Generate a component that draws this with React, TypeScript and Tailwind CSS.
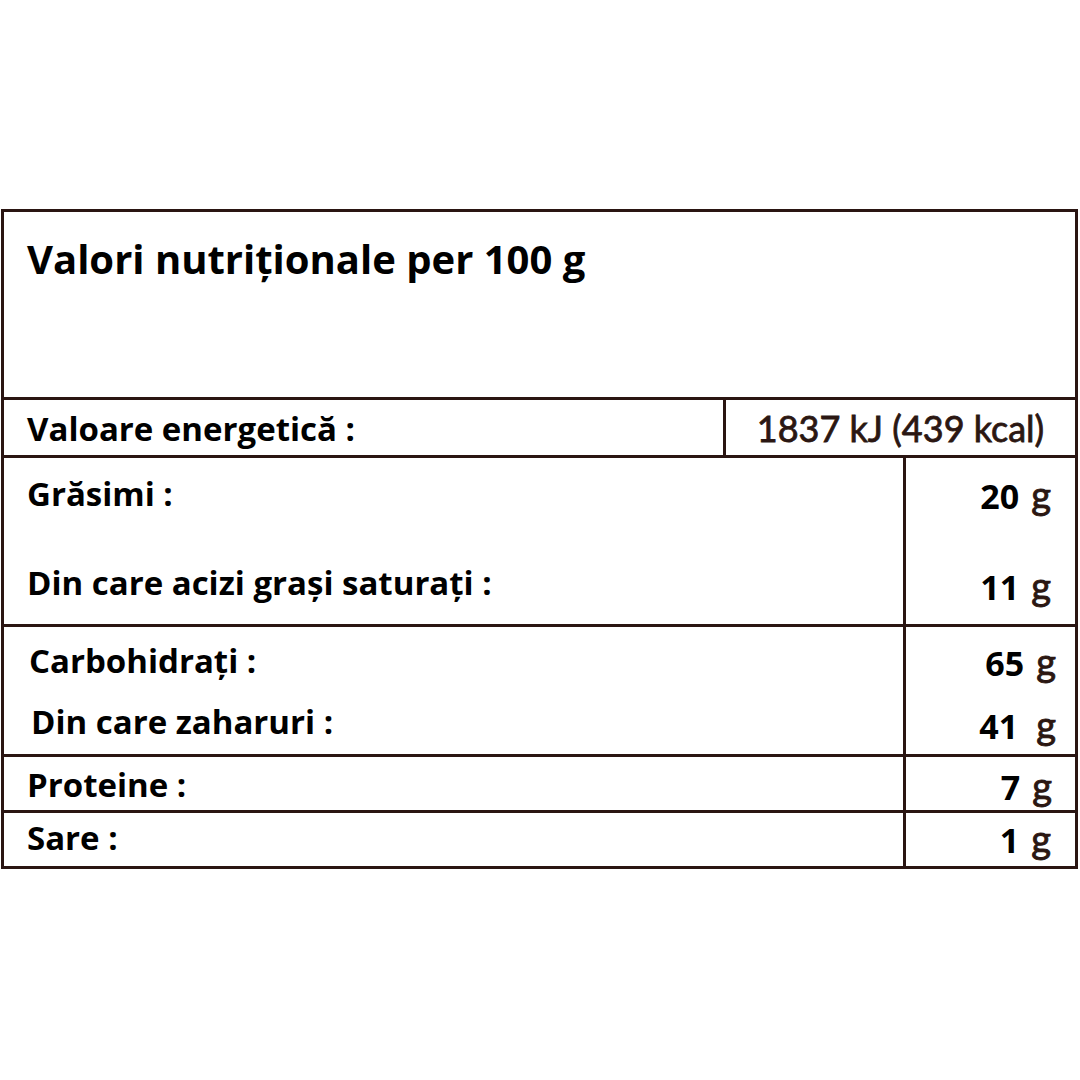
import React from "react";

const B = "border-[#2a1512]";
const label = "font-['Open_Sans',sans-serif] font-bold text-[33px] leading-[40px] text-black whitespace-nowrap";
const num = "font-['Open_Sans',sans-serif] font-bold text-[34px] leading-[40px] text-black";
const unit = "font-['Lato',sans-serif] text-[38px] leading-[40px] text-[#2b1712] [-webkit-text-stroke:0.9px_#2b1712]";

function Val({ n, className = "" }: { n: string; className?: string }) {
  return (
    <div className={`flex items-baseline justify-end gap-[12px] ${className}`}>
      <span className={num}>{n}</span>
      <span className={unit}>g</span>
    </div>
  );
}

export default function App() {
  return (
    <div className="w-[1080px] h-[1080px] bg-white pt-[209px] pl-[1px]">
      <div className={`w-[1077px] border-[3px] ${B} flex flex-col`}>
        <div className={`h-[188px] border-b-[3px] ${B} pt-[24px] pl-[23px]`}>
          <div className="font-['Open_Sans',sans-serif] font-bold text-[40px] leading-[46px] text-black">
            Valori nutriționale per 100 g
          </div>
        </div>
        <div className={`h-[58px] border-b-[3px] ${B} flex`}>
          <div className={`w-[722px] border-r-[3px] ${B} pt-[9px] pl-[23px]`}>
            <div className={label}>Valoare energetică :</div>
          </div>
          <div className="flex-1 flex justify-center pt-[8px]">
            <div className="font-['Lato',sans-serif] text-[36px] leading-[40px] text-[#2b1712] [-webkit-text-stroke:0.8px_#2b1712] whitespace-nowrap">
              1837 kJ (439 kcal)
            </div>
          </div>
        </div>
        <div className={`h-[169px] border-b-[3px] ${B} flex`}>
          <div className={`w-[902px] border-r-[3px] ${B} pt-[16px] pl-[23px] flex flex-col gap-[49px]`}>
            <div className={label}>Grăsimi :</div>
            <div className={label}>Din care acizi grași saturați :</div>
          </div>
          <div className="flex-1 pt-[16px] pr-[24px] flex flex-col gap-[49px]">
            <Val n="20" />
            <Val n="11" />
          </div>
        </div>
        <div className={`h-[130px] border-b-[3px] ${B} flex`}>
          <div className={`w-[902px] border-r-[3px] ${B} pt-[14px] pl-[25px] flex flex-col gap-[21px]`}>
            <div className={label}>Carbohidrați :</div>
            <div className={`${label} pl-[2px]`}>Din care zaharuri :</div>
          </div>
          <div className="flex-1 pt-[14px] pr-[19px] flex flex-col gap-[21px]">
            <Val n="65" />
            <Val n="41" className="gap-[18px]" />
          </div>
        </div>
        <div className={`h-[56px] border-b-[3px] ${B} flex`}>
          <div className={`w-[902px] border-r-[3px] ${B} pt-[8px] pl-[23px]`}>
            <div className={label}>Proteine :</div>
          </div>
          <div className="flex-1 pt-[8px] pr-[23px]">
            <Val n="7" className="gap-[8px]" />
          </div>
        </div>
        <div className="h-[53px] flex">
          <div className={`w-[902px] border-r-[3px] ${B} pt-[5px] pl-[23px]`}>
            <div className={label}>Sare :</div>
          </div>
          <div className="flex-1 pt-[5px] pr-[24px]">
            <Val n="1" className="gap-[6px]" />
          </div>
        </div>
      </div>
    </div>
  );
}
